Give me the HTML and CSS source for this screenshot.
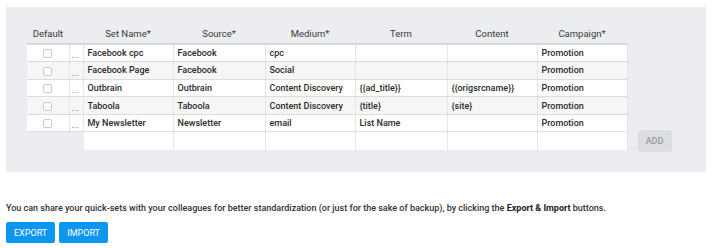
FILE: index.html
```html
<!DOCTYPE html>
<html>
<head>
<meta charset="utf-8">
<link rel="stylesheet" href="styles.css">
</head>
<body>
<div class="page">
  <div class="panel">
    <div class="table-wrap">
      <table class="sets">
        <colgroup>
          <col class="c-def"><col class="c-dots"><col class="c-90"><col class="c-92"><col class="c-90"><col class="c-92"><col class="c-90"><col class="c-90">
        </colgroup>
        <thead>
          <tr>
            <th class="th-def" colspan="2"><span class="def-label">Default</span></th>
            <th>Set Name*</th>
            <th>Source*</th>
            <th>Medium*</th>
            <th>Term</th>
            <th>Content</th>
            <th>Campaign*</th>
          </tr>
        </thead>
        <tbody>
          <tr>
            <td class="cb"><span class="box"></span></td><td class="dots">...</td>
            <td>Facebook cpc</td><td>Facebook</td><td>cpc</td><td></td><td></td><td>Promotion</td>
          </tr>
          <tr class="alt">
            <td class="cb"><span class="box"></span></td><td class="dots">...</td>
            <td>Facebook Page</td><td>Facebook</td><td>Social</td><td></td><td></td><td>Promotion</td>
          </tr>
          <tr>
            <td class="cb"><span class="box"></span></td><td class="dots">...</td>
            <td>Outbrain</td><td>Outbrain</td><td>Content Discovery</td><td>{{ad_title}}</td><td>{{origsrcname}}</td><td>Promotion</td>
          </tr>
          <tr class="alt">
            <td class="cb"><span class="box"></span></td><td class="dots">...</td>
            <td>Taboola</td><td>Taboola</td><td>Content Discovery</td><td>{title}</td><td>{site}</td><td>Promotion</td>
          </tr>
          <tr>
            <td class="cb"><span class="box"></span></td><td class="dots">...</td>
            <td>My Newsletter</td><td>Newsletter</td><td>email</td><td>List Name</td><td></td><td>Promotion</td>
          </tr>
          <tr class="blank">
            <td class="empty" colspan="2"></td>
            <td class="in"></td><td class="in"></td><td class="in"></td><td class="in"></td><td class="in"></td><td class="in"></td>
          </tr>
        </tbody>
      </table>
      <button class="add">ADD</button>
    </div>
  </div>
  <p class="note">You can share your quick-sets with your colleagues for better standardization (or just for the sake of backup), by clicking the <b>Export &amp; Import</b> buttons.</p>
  <div class="actions">
    <button class="btn">EXPORT</button>
    <button class="btn">IMPORT</button>
  </div>
</div>
</body>
</html>
```

FILE: styles.css
```css
* { box-sizing: border-box; }
html, body { margin: 0; padding: 0; background: #fff; }
body { font-family: Roboto, "Helvetica Neue", Arial, sans-serif; font-size: 9px; color: #333; }
.page { padding: 7px 6px 0 6px; }
.panel {
  background: #ebedf0;
  height: 165px;
  padding: 17px 0 0 21px;
}
.table-wrap { display: flex; align-items: flex-end; gap: 10px; }
.sets { border-collapse: collapse; table-layout: fixed; width: 600px; }
.c-def { width: 42px; }
.c-dots { width: 14px; }
.c-90 { width: 90px; }
.c-92 { width: 92px; }
.sets th {
  font-weight: 400;
  font-size: 9.5px;
  color: #3a3a3a;
  height: 20px;
  padding: 0 0 4px 0;
  text-align: center;
  vertical-align: bottom;
  border-bottom: 2px solid #d6d8db;
  white-space: nowrap;
}
.th-def { text-align: left !important; }
.def-label { display: inline-block; width: 42px; text-align: center; }
.sets td {
  height: 17.6px;
  padding: 0 4px;
  font-weight: 500;
  font-size: 9px;
  color: #2b2b2b;
  background: #fff;
  border-bottom: 1px solid #dcdcdc;
  border-right: 1px dashed #e2e2e2;
  white-space: nowrap;
  overflow: hidden;
  vertical-align: middle;
  line-height: 14px;
}
.sets tr.alt td { background: #f6f6f6; }
.sets td.cb { text-align: center; padding: 0; }
.box {
  display: inline-block;
  width: 9px; height: 9px;
  border: 1px solid #c8c8c8;
  border-radius: 2px;
  background: #fff;
  vertical-align: middle;
}
.sets td.dots {
  color: #e0392b;
  padding: 0 0 0 2px;
  font-weight: 400;
  vertical-align: bottom;
  line-height: 12px;
  border-left: 1px dashed #e2e2e2;
}
.sets tr.blank td { height: 18px; border-bottom: none; }
.sets tr.blank td.empty { background: transparent; border-right-color: transparent; }
.add {
  width: 34px; height: 22px;
  margin-bottom: -2px;
  border: none;
  border-radius: 3px;
  background: #dcdde0;
  color: #9a9a9a;
  font-family: Roboto, Arial, sans-serif;
  font-size: 9px;
  font-weight: 500;
  padding: 0;
}
.note { margin: 30px 0 0 0; font-size: 9px; font-weight: 500; color: #333; line-height: 12px; }
.note b { font-weight: 700; color: #222; }
.actions { display: flex; gap: 4px; margin-top: 8px; }
.btn {
  height: 21px;
  padding: 0 8px;
  border: none;
  border-radius: 2px;
  background: #0d96f0;
  color: #fff;
  font-family: Roboto, Arial, sans-serif;
  font-size: 9px;
  font-weight: 400;
}
```
